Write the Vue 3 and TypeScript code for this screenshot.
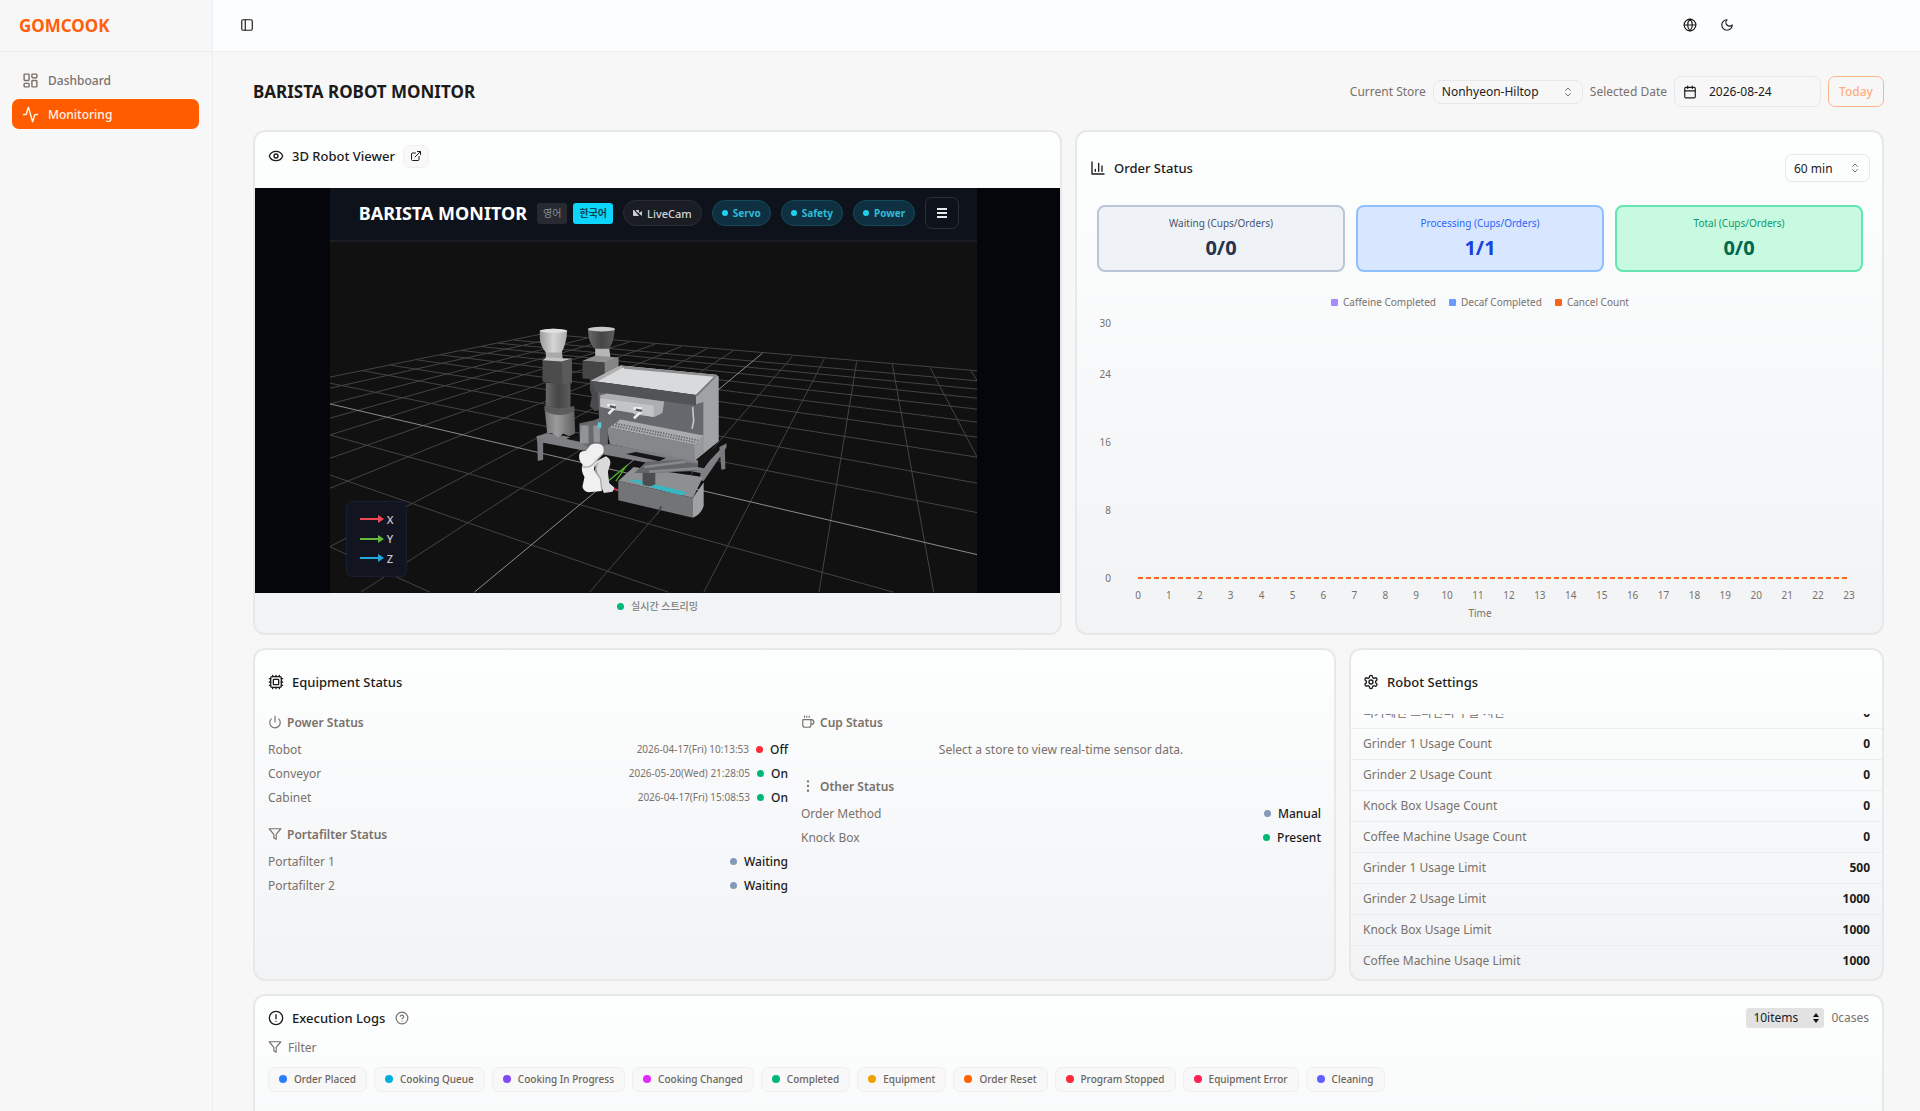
<script setup lang="ts">
import { h, onMounted, ref } from 'vue'
import type { FunctionalComponent } from 'vue'

const iconShapes: Record<string, string> = {
  dashboard:
    '<rect width="7" height="9" x="3" y="3" rx="1"/><rect width="7" height="5" x="14" y="3" rx="1"/><rect width="7" height="9" x="14" y="12" rx="1"/><rect width="7" height="5" x="3" y="16" rx="1"/>',
  activity:
    '<path d="M22 12h-2.48a2 2 0 0 0-1.93 1.46l-2.35 8.36a.25.25 0 0 1-.48 0L9.24 2.18a.25.25 0 0 0-.48 0l-2.35 8.36A2 2 0 0 1 4.49 12H2"/>',
  panel: '<rect width="18" height="18" x="3" y="3" rx="2"/><path d="M9 3v18"/>',
  globe: '<circle cx="12" cy="12" r="10"/><path d="M12 2a14.5 14.5 0 0 0 0 20 14.5 14.5 0 0 0 0-20M2 12h20"/>',
  moon: '<path d="M12 3a6 6 0 0 0 9 9 9 9 0 1 1-9-9Z"/>',
  calendar: '<path d="M8 2v4M16 2v4"/><rect width="18" height="18" x="3" y="4" rx="2"/><path d="M3 10h18"/>',
  eye: '<path d="M2.06 12.35a1 1 0 0 1 0-.7 10.75 10.75 0 0 1 19.88 0 1 1 0 0 1 0 .7 10.75 10.75 0 0 1-19.88 0"/><circle cx="12" cy="12" r="3"/>',
  external: '<path d="M15 3h6v6M10 14 21 3M18 13v6a2 2 0 0 1-2 2H5a2 2 0 0 1-2-2V8a2 2 0 0 1 2-2h6"/>',
  chart: '<path d="M3 3v18h18M18 17V9M13 17V5M8 17v-3"/>',
  cpu: '<path d="M12 20v2M12 2v2M17 20v2M17 2v2M2 12h2M2 17h2M2 7h2M20 12h2M20 17h2M20 7h2M7 20v2M7 2v2"/><rect width="16" height="16" x="4" y="4" rx="2"/><rect width="8" height="8" x="8" y="8" rx="1"/>',
  power: '<path d="M12 2v10M18.4 6.6a9 9 0 1 1-12.77.04"/>',
  filter: '<path d="M22 3H2l8 9.46V19l4 2v-8.54L22 3z"/>',
  cup: '<path d="M10 2v2M14 2v2M6 2v2M16 8a1 1 0 0 1 1 1v8a4 4 0 0 1-4 4H7a4 4 0 0 1-4-4V9a1 1 0 0 1 1-1h14a4 4 0 1 1 0 8h-1"/>',
  dots: '<circle cx="12" cy="12" r="1"/><circle cx="12" cy="4" r="1"/><circle cx="12" cy="20" r="1"/>',
  settings:
    '<path d="M12.22 2h-.44a2 2 0 0 0-2 2v.18a2 2 0 0 1-1 1.73l-.43.25a2 2 0 0 1-2 0l-.15-.08a2 2 0 0 0-2.73.73l-.22.38a2 2 0 0 0 .73 2.73l.15.1a2 2 0 0 1 1 1.72v.51a2 2 0 0 1-1 1.74l-.15.09a2 2 0 0 0-.73 2.73l.22.38a2 2 0 0 0 2.73.73l.15-.08a2 2 0 0 1 2 0l.43.25a2 2 0 0 1 1 1.73V20a2 2 0 0 0 2 2h.44a2 2 0 0 0 2-2v-.18a2 2 0 0 1 1-1.73l.43-.25a2 2 0 0 1 2 0l.15.08a2 2 0 0 0 2.73-.73l.22-.39a2 2 0 0 0-.73-2.73l-.15-.08a2 2 0 0 1-1-1.74v-.5a2 2 0 0 1 1-1.74l.15-.09a2 2 0 0 0 .73-2.73l-.22-.38a2 2 0 0 0-2.73-.73l-.15.08a2 2 0 0 1-2 0l-.43-.25a2 2 0 0 1-1-1.73V4a2 2 0 0 0-2-2z"/><circle cx="12" cy="12" r="3"/>',
  alert: '<circle cx="12" cy="12" r="10"/><path d="M12 7v6M12 17h.01"/>',
  help: '<circle cx="12" cy="12" r="10"/><path d="M9.09 9a3 3 0 0 1 5.83 1c0 2-3 3-3 3M12 17h.01"/>',
  updown: '<path d="m7 15 5 5 5-5M7 9l5-5 5 5"/>',
}

const Icon: FunctionalComponent<{ name: string; size?: number }> = (props) =>
  h('svg', {
    width: props.size ?? 16,
    height: props.size ?? 16,
    viewBox: '0 0 24 24',
    fill: 'none',
    stroke: 'currentColor',
    'stroke-width': 2,
    'stroke-linecap': 'round',
    'stroke-linejoin': 'round',
    'aria-hidden': 'true',
    innerHTML: iconShapes[props.name],
  })
Icon.props = ['name', 'size']

const store = ref('Nonhyeon-Hiltop')
const date = ref('2026-08-24')
const interval = ref('60 min')
const pageSize = ref('10items')

const stats = [
  { label: 'Waiting (Cups/Orders)', value: '0/0', tone: 'slate' },
  { label: 'Processing (Cups/Orders)', value: '1/1', tone: 'blue' },
  { label: 'Total (Cups/Orders)', value: '0/0', tone: 'green' },
]

const legend = [
  { label: 'Caffeine Completed', color: '#a78bfa' },
  { label: 'Decaf Completed', color: '#6b9bff' },
  { label: 'Cancel Count', color: '#f9651a' },
]

const yTicks = [
  { value: 30, y: 12 },
  { value: 24, y: 63 },
  { value: 16, y: 131 },
  { value: 8, y: 199 },
  { value: 0, y: 267 },
]
const hours = Array.from({ length: 24 }, (_, i) => i)
const hourX = (i: number) => 48 + (i * 711) / 23

const power = [
  { name: 'Robot', time: '2026-04-17(Fri) 10:13:53', state: 'Off', dot: 'red' },
  { name: 'Conveyor', time: '2026-05-20(Wed) 21:28:05', state: 'On', dot: 'green' },
  { name: 'Cabinet', time: '2026-04-17(Fri) 15:08:53', state: 'On', dot: 'green' },
]
const portafilters = [
  { name: 'Portafilter 1', state: 'Waiting', dot: 'slate' },
  { name: 'Portafilter 2', state: 'Waiting', dot: 'slate' },
]
const others = [
  { name: 'Order Method', state: 'Manual', dot: 'slate' },
  { name: 'Knock Box', state: 'Present', dot: 'green' },
]

const settings = [
  { name: '디카페인 그라인더 추출 시간', value: 0 },
  { name: 'Grinder 1 Usage Count', value: 0 },
  { name: 'Grinder 2 Usage Count', value: 0 },
  { name: 'Knock Box Usage Count', value: 0 },
  { name: 'Coffee Machine Usage Count', value: 0 },
  { name: 'Grinder 1 Usage Limit', value: 500 },
  { name: 'Grinder 2 Usage Limit', value: 1000 },
  { name: 'Knock Box Usage Limit', value: 1000 },
  { name: 'Coffee Machine Usage Limit', value: 1000 },
]
const settingsList = ref<HTMLElement | null>(null)
onMounted(() => {
  if (settingsList.value) settingsList.value.scrollTop = 16
})

const filters = [
  { label: 'Order Placed', color: '#2b7fff' },
  { label: 'Cooking Queue', color: '#00b0d8' },
  { label: 'Cooking In Progress', color: '#8349f8' },
  { label: 'Cooking Changed', color: '#e12afb' },
  { label: 'Completed', color: '#00b876' },
  { label: 'Equipment', color: '#f0a000' },
  { label: 'Order Reset', color: '#ff6200' },
  { label: 'Program Stopped', color: '#fb2c36' },
  { label: 'Equipment Error', color: '#ff2056' },
  { label: 'Cleaning', color: '#615fff' },
]

// Floor grid, as [x1, y1, x2, y2]
const gridLines = [
  [1037, 530, 650, 1236], [1098, 537, 868, 1236], [1160, 545, 1088, 1236], [1228, 553, 1307, 1236],
  [1300, 563, 1391, 835], [1378, 573, 1391, 605], [925, 512, 213, 1236], [875, 506, 154, 1100],
  [825, 500, 154, 925], [775, 493, 154, 835], [725, 487, 154, 765], [683, 481, 154, 715],
  [645, 475, 154, 672], [602, 469, 154, 625], [560, 462, 154, 592],
  [154, 610, 1391, 998], [215, 572, 1391, 910], [270, 556, 1391, 832], [320, 540, 1391, 772],
  [365, 525, 1391, 727], [405, 512, 1391, 688], [440, 500, 1391, 655], [475, 490, 1391, 628],
  [505, 481, 1391, 603], [560, 462, 1391, 573],
  [154, 765, 1230, 1236], [154, 885, 800, 1236], [154, 1100, 345, 1236],
]
const axisLines = [
  [980, 520, 430, 1236], [154, 672, 1391, 1124],
]
</script>

<template>
  <div class="app">
    <aside class="sidebar">
      <div class="brand">GOMCOOK</div>
      <nav class="nav">
        <a href="#dashboard" class="nav-item"><Icon name="dashboard" :size="17" />Dashboard</a>
        <a href="#monitoring" class="nav-item active"><Icon name="activity" :size="17" />Monitoring</a>
      </nav>
    </aside>

    <div class="page">
      <header class="topbar">
        <button type="button" class="icon-btn" aria-label="Toggle sidebar"><Icon name="panel" :size="14" /></button>
        <div class="topbar-right">
          <button type="button" class="icon-btn" aria-label="Language"><Icon name="globe" :size="14" /></button>
          <button type="button" class="icon-btn" aria-label="Theme"><Icon name="moon" :size="14" /></button>
        </div>
      </header>

      <main class="main">
        <div class="title-row">
          <h1>BARISTA ROBOT MONITOR</h1>
          <div class="controls">
            <label for="store">Current Store</label>
            <span class="select store">
              <select id="store" v-model="store"><option>Nonhyeon-Hiltop</option></select>
              <Icon name="updown" :size="12" />
            </span>
            <label for="date">Selected Date</label>
            <span class="date">
              <Icon name="calendar" :size="14" />
              <input id="date" v-model="date" type="text" />
            </span>
            <button type="button" class="today">Today</button>
          </div>
        </div>

        <div class="row two">
          <section class="card viewer">
            <div class="viewer-head">
              <h2><Icon name="eye" :size="16" />3D Robot Viewer</h2>
              <button type="button" class="open-btn" aria-label="Open viewer"><Icon name="external" :size="12" /></button>
            </div>
            <div class="video">
              <div class="stream">
                <div class="stream-head">
                  <strong>BARISTA MONITOR</strong>
                  <button type="button" class="lang">영어</button>
                  <button type="button" class="lang on">한국어</button>
                  <span class="pill cam">
                    <svg width="9" height="8" viewBox="0 0 9 8" aria-hidden="true"><path d="M0 1h1l5 6H1a1 1 0 0 1-1-1zM3 1h3v3l3-2v5L3 2z" fill="#c9ccd1" /></svg>
                    LiveCam
                  </span>
                  <span class="pill"><i></i>Servo</span>
                  <span class="pill"><i></i>Safety</span>
                  <span class="pill"><i></i>Power</span>
                  <button type="button" class="menu" aria-label="Menu">
                    <svg width="10" height="10" viewBox="0 0 10 10" aria-hidden="true"><path d="M0 1h10M0 5h10M0 9h10" stroke="#e8e8ea" stroke-width="2" /></svg>
                  </button>
                </div>
                <div class="stage">
                  <svg class="scene" viewBox="0 54 647 350" preserveAspectRatio="xMidYMid slice" aria-hidden="true">
                    <defs>
                      <linearGradient id="metal" x1="0" x2="1"><stop offset="0" stop-color="#9b9b9b" /><stop offset=".5" stop-color="#d6d6d6" /><stop offset="1" stop-color="#ababab" /></linearGradient>
                      <linearGradient id="dark" x1="0" x2="1"><stop offset="0" stop-color="#6a6a6a" /><stop offset=".5" stop-color="#454545" /><stop offset="1" stop-color="#5d5d5d" /></linearGradient>
                      <linearGradient id="base" x1="0" x2="1"><stop offset="0" stop-color="#767676" /><stop offset=".4" stop-color="#9c9c9c" /><stop offset="1" stop-color="#5f5f5f" /></linearGradient>
                    </defs>
                    <g transform="scale(.523 .3333) translate(-154 -25)">
                      <line v-for="(l, i) in gridLines" :key="i" class="grid" :x1="l[0]" :y1="l[1]" :x2="l[2]" :y2="l[3]" />
                      <line v-for="(l, i) in axisLines" :key="'a' + i" class="axis" :x1="l[0]" :y1="l[1]" :x2="l[2]" :y2="l[3]" />
                    </g>
                    <g transform="translate(189 122) scale(.3333)">
                      <!-- rear grinder -->
                      <path d="M212 205h45v90l-30 8-15-15 6-30-6-20z" fill="#4a4a4a" />
                      <path d="M228 112h42l4 32h-46z" fill="#b5b5b5" />
                      <path d="M206 56q40-12 81 0l-3 24q-4 22-14 36h-44q-16-18-18-40z" fill="url(#dark)" />
                      <ellipse cx="247" cy="57" rx="40" ry="7" fill="#c9c9c9" />
                      <path d="M190 152l38-15 70 5-40 16z" fill="#8f8f8f" />
                      <path d="M190 152l66 5v52l-66-4z" fill="#464646" />
                      <path d="M256 157l42-16v36l-42 30z" fill="#858585" />
                      <!-- table -->
                      <path d="M52 378l34-10 480 88 55-58v14l-68 100-10-2v-22L250 432 54 394z" fill="#7d7f82" />
                      <path d="M160 376l82 18-8 12-92-20zM350 425l90 18-20 10-100-22zM540 430l62-22-48 66-20-4z" fill="#161616" />
                      <path d="M54 384h18v64l-16 4zM600 410l16-8 2 74-12 2z" fill="#77797c" />
                      <!-- front grinder -->
                      <path d="M80 125h48l4 28H80z" fill="#aaa" />
                      <path d="M62 62q41-12 82 0l-2 20q-5 28-15 45H80Q64 108 62 84z" fill="url(#metal)" />
                      <ellipse cx="103" cy="62" rx="41" ry="6" fill="#e0e0e0" />
                      <path d="M80 218h74v90H80z" fill="url(#dark)" />
                      <path d="M76 288q45 16 89 0l3 82-18 8-18-8-14 12-20-14H84z" fill="url(#base)" />
                      <path d="M78 285q44 18 86 2l2 16q-44 22-90 0z" fill="#5c5c5c" />
                      <path d="M70 150l88-6v76l-28 4-60-10z" fill="#4c4c4c" />
                      <path d="M70 150l12-8 76 4-30 8z" fill="#c4c4c4" />
                      <path d="M128 154l30-8v72l-28 6z" fill="#5a5a5a" />
                      <!-- espresso machine -->
                      <path d="M236 235l320 40v112L240 335z" fill="#66686d" />
                      <path d="M530 255l60-62 8 6v194l-72 58-4-50 30-28v-98l-24 8z" fill="#a0a2a5" />
                      <path d="M215 212l90-46 285 28-60 60z" fill="#d9dadb" />
                      <path d="M215 212l90-46 12 3-78 43z" fill="#b0b0b1" />
                      <path d="M305 166l285 28-4 6-270-24z" fill="#8c8d8f" />
                      <path d="M215 212l315 42v32l-300-40z" fill="#525356" />
                      <path d="M528 256l60-60 5 1-60 62z" fill="#787a7c" />
                      <path d="M243 256l20-6 172 24-6 34-24 12-62-8-2-6-56-6-40-14z" fill="#adaeb0" />
                      <path d="M243 264l160 22v34l-160-30z" fill="#c3c4c6" />
                      <path d="M264 285h20v10l-16 16M342 294h22v12l-20 18" fill="none" stroke="#ededed" stroke-width="8" />
                      <path d="M272 288l18 4M350 298l18 4" stroke="#555" stroke-width="7" />
                      <path d="M520 290l3 42-5 24" fill="none" stroke="#c4c4c4" stroke-width="5" />
                      <path d="M262 350l42-22 248 48-26 28z" fill="#a9abad" />
                      <path d="M290 340l246 50M280 346l246 50" stroke="#626467" stroke-width="5" stroke-dasharray="4 4" />
                      <path d="M262 350l264 52v50L272 402z" fill="#85878b" />
                      <path d="M526 402l28-28v50l-28 28z" fill="#97999c" />
                      <!-- milk station -->
                      <path d="M180 340l44-10 24-10 50 12-32 22v50l-60 6-24-14z" fill="#68696c" />
                      <path d="M184 346h24v54h-26zM222 346h20v50h-18z" fill="#919396" />
                      <path d="M236 336h10v18h-12z" fill="#63c5ce" />
                      <!-- axes at the origin -->
                      <path d="M270 510l55-46M290 512l30-44" stroke="#4fae2e" stroke-width="4" />
                      <path d="M262 530l36 10" stroke="#e0325a" stroke-width="5" />
                      <!-- robot arm -->
                      <path d="M226 456l34-18q16 8 13 24l-7 22 4 34 16 14-6 12-26 4-16-40z" fill="#dadada" />
                      <path d="M180 434q2-14 20-12l14-18q18-8 34 0 10 12 2 28l-22 26-4 20 20 30 4 34-40 4q-18-4-18-18l6-28q-12-18-6-38-12-10-10-28z" fill="#f0f0f0" />
                      <path d="M188 468q24 8 38-12l24-24M236 458l-8 22 16 26 4 34" fill="none" stroke="#a9a9a9" stroke-width="4" />
                      <!-- knock box -->
                      <path d="M297 512l46-42 208 30-30 62z" fill="#8d8f91" />
                      <path d="M332 512l12-5 156 38-6 10-22-2z" fill="#34b9c4" />
                      <path d="M297 512l224 50v60l-224-52z" fill="#727477" />
                      <path d="M521 562l32-46v70q-6 24-32 36z" fill="#9fa1a3" />
                      <path d="M345 488l36-34 110-6 10 8 36 4-4 22-60 2-80 4z" fill="#636568" />
                      <path d="M375 470l124-16M390 484l146-10" stroke="#85878a" stroke-width="8" />
                      <path d="M370 488h38v34q-18 12-38 0z" fill="#4c4d4f" />
                      <path d="M426 588l-12 24" stroke="#3c3c3c" stroke-width="4" />
                    </g>
                  </svg>
                  <ul class="axes">
                    <li v-for="a in [['X', '#ee4a54'], ['Y', '#62b83a'], ['Z', '#24a8dc']]" :key="a[0]">
                      <svg width="24" height="8" viewBox="0 0 24 8" aria-hidden="true"><path d="M0 3h18V0l6 4-6 4V5H0z" :fill="a[1]" /></svg>{{ a[0] }}
                    </li>
                  </ul>
                </div>
              </div>
            </div>
            <p class="live"><i class="dot live-dot"></i>실시간 스트리밍</p>
          </section>

          <section class="card orders">
            <div class="orders-head">
              <h2><Icon name="chart" :size="16" />Order Status</h2>
              <span class="select interval">
                <select v-model="interval" aria-label="Interval"><option>60 min</option></select>
                <Icon name="updown" :size="12" />
              </span>
            </div>
            <div class="stats">
              <div v-for="s in stats" :key="s.label" class="stat" :class="s.tone">
                <span>{{ s.label }}</span>
                <b>{{ s.value }}</b>
              </div>
            </div>
            <ul class="legend">
              <li v-for="l in legend" :key="l.label"><i :style="{ background: l.color }"></i>{{ l.label }}</li>
            </ul>
            <svg class="chart" viewBox="0 0 780 312" role="img" aria-label="Orders by hour">
              <g v-for="t in yTicks" :key="t.value">
                <line x1="29" x2="772" :y1="t.y" :y2="t.y" stroke="#f1f2f4" stroke-dasharray="3 3" />
                <text x="21" :y="t.y + 4" text-anchor="end">{{ t.value }}</text>
              </g>
              <line x1="48" x2="759" y1="267" y2="267" stroke="#f9651a" stroke-width="2" stroke-dasharray="5 3" />
              <text v-for="i in hours" :key="i" :x="hourX(i)" y="288" text-anchor="middle">{{ i }}</text>
              <text x="390" y="306" text-anchor="middle">Time</text>
            </svg>
          </section>
        </div>

        <div class="row three">
          <section class="card equipment">
            <h2><Icon name="cpu" :size="16" />Equipment Status</h2>
            <div class="equipment-cols">
              <div class="col">
                <div class="group">
                  <h3><Icon name="power" :size="14" />Power Status</h3>
                  <div v-for="p in power" :key="p.name" class="line">
                    <span>{{ p.name }}</span>
                    <span class="state"><time>{{ p.time }}</time><i class="dot" :class="p.dot"></i><b>{{ p.state }}</b></span>
                  </div>
                </div>
                <div class="group">
                  <h3><Icon name="filter" :size="14" />Portafilter Status</h3>
                  <div v-for="p in portafilters" :key="p.name" class="line">
                    <span>{{ p.name }}</span>
                    <span class="state"><i class="dot" :class="p.dot"></i><b>{{ p.state }}</b></span>
                  </div>
                </div>
              </div>
              <div class="col">
                <div class="group">
                  <h3><Icon name="cup" :size="14" />Cup Status</h3>
                  <p class="empty">Select a store to view real-time sensor data.</p>
                </div>
                <div class="group">
                  <h3><Icon name="dots" :size="14" />Other Status</h3>
                  <div v-for="p in others" :key="p.name" class="line">
                    <span>{{ p.name }}</span>
                    <span class="state"><i class="dot" :class="p.dot"></i><b>{{ p.state }}</b></span>
                  </div>
                </div>
              </div>
            </div>
          </section>

          <section class="card robot">
            <h2><Icon name="settings" :size="16" />Robot Settings</h2>
            <dl ref="settingsList" class="settings">
              <div v-for="s in settings" :key="s.name">
                <dt>{{ s.name }}</dt>
                <dd>{{ s.value }}</dd>
              </div>
            </dl>
          </section>
        </div>

        <section class="card logs">
          <div class="logs-head">
            <h2><Icon name="alert" :size="16" />Execution Logs</h2>
            <button type="button" class="help" aria-label="Help"><Icon name="help" :size="14" /></button>
            <span class="page-size">
              <select v-model="pageSize" aria-label="Items per page"><option>10items</option></select>
              <svg width="6" height="10" viewBox="0 0 6 10" aria-hidden="true"><path d="M3 0l3 4H0zM3 10l3-4H0z" fill="#111" /></svg>
            </span>
            <span class="cases">0cases</span>
          </div>
          <div class="filter-label"><Icon name="filter" :size="14" />Filter</div>
          <div class="chips">
            <button v-for="f in filters" :key="f.label" type="button" class="chip">
              <i :style="{ background: f.color }"></i>{{ f.label }}
            </button>
          </div>
        </section>
      </main>
    </div>
  </div>
</template>

<style>
body {
  margin: 0;
  background: #f7f7f7;
}
</style>

<style scoped>
.app {
  display: flex;
  height: 100vh;
  overflow: hidden;
  background: #f7f7f7;
  color: #1c1b1a;
  font-family: 'Noto Sans', 'Noto Sans CJK KR', sans-serif;
  font-size: 12px;
  line-height: 17px;
}
h1, h2, h3, p, ul, dl, dd {
  margin: 0;
  padding: 0;
}
ul {
  list-style: none;
}
button, select, input {
  font: inherit;
  color: inherit;
  border: 0;
  background: none;
  padding: 0;
  margin: 0;
}
select {
  appearance: none;
  outline: none;
}
svg {
  flex: none;
  display: block;
}

.sidebar {
  flex: none;
  width: 212px;
  border-right: 1px solid #eceef0;
}
.brand {
  height: 51px;
  border-bottom: 1px solid #eceeee;
  padding-left: 19px;
  line-height: 51px;
  font-size: 17px;
  font-weight: 700;
  color: #ff5f0a;
}
.nav {
  display: flex;
  flex-direction: column;
  gap: 4px;
  padding: 13px 13px 0 12px;
}
.nav-item {
  display: flex;
  align-items: center;
  gap: 9px;
  height: 30px;
  padding-left: 10px;
  border-radius: 7px;
  color: #79716b;
  font-weight: 500;
  text-decoration: none;
}
.nav-item.active {
  background: #ff5c00;
  color: #fff3ea;
}

.page {
  flex: 1;
  min-width: 0;
  display: flex;
  flex-direction: column;
}
.topbar {
  flex: none;
  display: flex;
  align-items: center;
  justify-content: space-between;
  box-sizing: border-box;
  height: 52px;
  padding: 0 178px 1px 19px;
  border-bottom: 1px solid #eff1f3;
  background: #fcfdff;
}
.topbar-right {
  display: flex;
  gap: 7px;
}
.icon-btn {
  display: grid;
  place-items: center;
  width: 30px;
  height: 30px;
}
.main {
  flex: 1;
  min-height: 0;
  overflow-y: auto;
  scrollbar-width: none;
  padding: 24px 36px 24px 40px;
}
.title-row {
  display: flex;
  align-items: center;
  justify-content: space-between;
  margin-bottom: 23px;
}
h1 {
  font-size: 17px;
  line-height: 24px;
  font-weight: 700;
}
.controls {
  display: flex;
  align-items: center;
  gap: 7px;
  color: #79716b;
}
.select {
  display: flex;
  align-items: center;
  box-sizing: border-box;
  position: relative;
  border: 1px solid #e7e8ea;
  border-radius: 7px;
  color: #79716b;
}
.select select {
  width: 100%;
  height: 100%;
  padding: 0 24px 0 8px;
  color: #1c1b1a;
}
.select svg {
  position: absolute;
  right: 8px;
  pointer-events: none;
}
.store {
  width: 150px;
  height: 24px;
}
.interval {
  width: 85px;
  height: 28px;
}
.date {
  display: flex;
  align-items: center;
  gap: 12px;
  box-sizing: border-box;
  width: 147px;
  height: 31px;
  padding: 0 8px;
  border: 1px solid #e7e8ea;
  border-radius: 7px;
  color: #1c1b1a;
}
.date input {
  width: 100%;
  min-width: 0;
  outline: none;
}
.today {
  width: 56px;
  height: 31px;
  border: 1px solid #ffb58a;
  border-radius: 7px;
  color: #ffae80;
  font-weight: 500;
}

.row {
  display: grid;
  gap: 13px;
  margin-bottom: 13px;
}
.two {
  grid-template-columns: repeat(2, minmax(0, 1fr));
}
.three {
  grid-template-columns: repeat(3, minmax(0, 1fr));
}
.card {
  box-sizing: border-box;
  min-width: 0;
  border: 2px solid #e6e8ea;
  border-radius: 12px;
  background: linear-gradient(#fdfefe, #f2f3f5);
}
h2 {
  display: flex;
  align-items: center;
  gap: 8px;
  font-size: 13px;
  line-height: 20px;
  font-weight: 500;
}

.viewer-head {
  display: flex;
  align-items: center;
  gap: 8px;
  height: 48px;
  padding: 0 13px 8px;
}
.open-btn {
  display: grid;
  place-items: center;
  width: 26px;
  height: 23px;
  border: 1px solid #eef0f2;
  border-radius: 7px;
  background: #f8f8f8;
}
.video {
  display: flex;
  justify-content: center;
  box-sizing: border-box;
  aspect-ratio: 199 / 100;
  padding-right: 8px;
  background: #05060b;
}
.stream {
  display: flex;
  flex-direction: column;
  height: 100%;
  aspect-ratio: 16 / 10;
  background: #111;
}
.stream-head {
  flex: none;
  display: flex;
  align-items: center;
  gap: 10px;
  box-sizing: border-box;
  height: 54px;
  padding: 0 18px 2px 29px;
  border-bottom: 2px solid #1a1d22;
  background: #0e131b;
  color: #fff;
  white-space: nowrap;
}
.stream-head strong {
  font-size: 18px;
  line-height: 24px;
  margin-right: auto;
}
.lang {
  padding: 0 6px;
  height: 21px;
  border-radius: 3px;
  background: #272a31;
  color: #8c8f94;
  font-size: 10px;
}
.lang + .lang {
  margin-left: -4px;
}
.lang.on {
  background: #0bd5fb;
  color: #0b4550;
  font-weight: 700;
}
.pill {
  display: flex;
  align-items: center;
  gap: 5px;
  height: 24px;
  padding: 0 9px;
  border: 1px solid #17495a;
  border-radius: 13px;
  background: #0f3040;
  color: #2fbcd8;
  font-size: 10px;
  font-weight: 700;
}
.pill i {
  width: 6px;
  height: 6px;
  border-radius: 50%;
  background: #1fd2f2;
}
.cam {
  border-color: #2a2d33;
  background: #1a1d24;
  color: #d3d5d9;
  font-size: 11px;
  font-weight: 500;
}
.menu {
  display: grid;
  place-items: center;
  width: 34px;
  height: 32px;
  border: 1px solid #2b2f38;
  border-radius: 7px;
}
.stage {
  flex: 1;
  min-height: 0;
  position: relative;
}
.scene {
  width: 100%;
  height: 100%;
}
.grid, .axis {
  stroke: #444;
  stroke-width: 1;
  vector-effect: non-scaling-stroke;
}
.axis {
  stroke: #8c8c8c;
}
.axes {
  position: absolute;
  left: 16px;
  bottom: 16px;
  display: flex;
  flex-direction: column;
  justify-content: space-between;
  box-sizing: border-box;
  height: 76px;
  width: 61px;
  padding: 9px 13px;
  border: 1px solid #1b1e2b;
  border-radius: 6px;
  background: #12141f;
  color: #c9cbd0;
  font-size: 11px;
  font-weight: 500;
}
.axes li {
  display: flex;
  align-items: center;
  gap: 3px;
}
.dot {
  width: 7px;
  height: 7px;
  border-radius: 50%;
}
.live {
  display: flex;
  align-items: center;
  justify-content: center;
  gap: 7px;
  height: 28px;
  padding-bottom: 12px;
  color: #808080;
  font-size: 10px;
  font-weight: 500;
}
.live-dot, .green {
  background: #00b876;
}
.red {
  background: #fb2c36;
}
.dot.slate {
  background: #8499b8;
}

.orders {
  padding: 22px 12px 0 13px;
}
.orders-head {
  display: flex;
  align-items: center;
  justify-content: space-between;
}
.stats {
  display: grid;
  grid-template-columns: repeat(3, 1fr);
  gap: 11px;
  margin: 23px 7px 0;
}
.stat {
  display: flex;
  flex-direction: column;
  align-items: center;
  box-sizing: border-box;
  height: 67px;
  padding-top: 8px;
  border: 2px solid #bac6d8;
  border-radius: 8px;
  background: #eff2f7;
  color: #45556c;
  font-size: 10px;
}
.stat b {
  margin-top: 2px;
  color: #26334a;
  font-size: 20px;
  line-height: 28px;
}
.stat.blue {
  border-color: #8ec0ff;
  background: #d8e7ff;
  color: #2b64fb;
}
.stat.blue b {
  color: #1a40e0;
}
.stat.green {
  border-color: #65e6b1;
  background: #c8f9e1;
  color: #0b9a6a;
}
.stat.green b {
  color: #00684c;
}
.legend {
  display: flex;
  justify-content: center;
  gap: 13px;
  margin-top: 22px;
  color: #79716b;
  font-size: 10px;
}
.legend li {
  display: flex;
  align-items: center;
  gap: 5px;
}
.legend i {
  width: 7px;
  height: 7px;
  border-radius: 1px;
}
.chart {
  width: 100%;
}
.chart text {
  fill: #79716b;
  font-size: 10px;
}

.equipment {
  grid-column: span 2;
  padding: 22px 13px 0;
}
.equipment-cols {
  display: grid;
  grid-template-columns: 1fr 1fr;
  gap: 13px;
  margin-top: 22px;
}
.col {
  display: flex;
  flex-direction: column;
  gap: 20px;
}
.group {
  display: flex;
  flex-direction: column;
  gap: 7px;
  color: #79716b;
}
h3 {
  display: flex;
  align-items: center;
  gap: 5px;
  margin-bottom: 3px;
  font-size: 12px;
  line-height: 17px;
  font-weight: 600;
}
.line, .state {
  display: flex;
  align-items: center;
}
.line {
  justify-content: space-between;
}
.state {
  gap: 7px;
}
.state b {
  color: #1c1b1a;
  font-weight: 500;
}
time {
  font-size: 10px;
}
.empty {
  text-align: center;
}

.robot {
  display: flex;
  flex-direction: column;
  height: 333px;
  padding: 22px 0 12px;
}
.robot h2 {
  padding: 0 12px;
}
.settings {
  flex: 1;
  min-height: 0;
  margin-top: 22px;
  overflow-y: auto;
  scrollbar-width: none;
}
.settings div {
  display: flex;
  align-items: center;
  justify-content: space-between;
  height: 30px;
  padding: 0 12px;
  border-bottom: 1px solid #eaecee;
}
.settings dt {
  color: #79716b;
}
.settings dd {
  font-weight: 700;
}

.logs {
  min-height: 320px;
  padding: 12px 13px;
}
.logs-head {
  display: flex;
  align-items: center;
}
.help {
  margin: 0 auto 0 10px;
  color: #79716b;
}
.page-size {
  display: flex;
  align-items: center;
  position: relative;
  width: 78px;
  height: 20px;
  border-radius: 3px;
  background: #e2e2e3;
}
.page-size select {
  width: 100%;
  height: 100%;
  padding-left: 7px;
}
.page-size svg {
  position: absolute;
  right: 5px;
  pointer-events: none;
}
.cases {
  margin-left: 7px;
  color: #79716b;
}
.filter-label {
  display: flex;
  align-items: center;
  gap: 6px;
  margin: 11px 0;
  color: #79716b;
}
.chips {
  display: flex;
  flex-wrap: wrap;
  gap: 7px;
}
.chip {
  display: flex;
  align-items: center;
  gap: 7px;
  height: 25px;
  padding: 0 10px;
  border: 1px solid #eeeff1;
  border-radius: 7px;
  background: #f8f8f8;
  color: #6b645e;
  font-size: 10px;
  font-weight: 500;
}
.chip i {
  width: 8px;
  height: 8px;
  border-radius: 50%;
}
</style>
